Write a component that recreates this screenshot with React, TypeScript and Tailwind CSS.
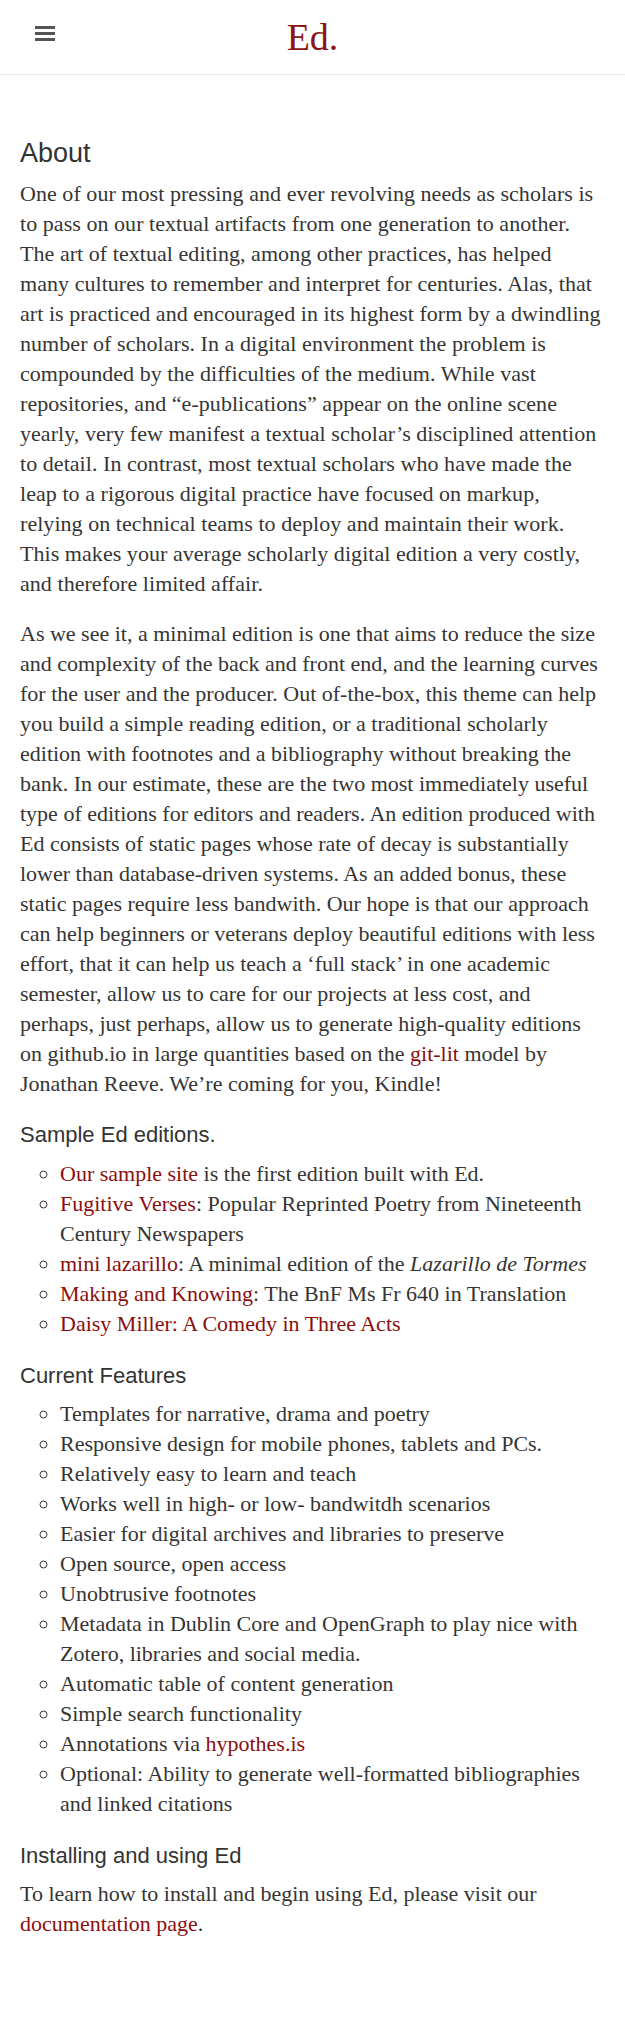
const serif = "font-['Liberation_Serif',_'Times_New_Roman',_serif]"
const sans = "font-['Liberation_Sans',_Arial,_sans-serif]"

const A = ({ children }: { children: React.ReactNode }) => (
  <a href="#" className="text-[#8b0e0e] no-underline">
    {children}
  </a>
)

const features: React.ReactNode[] = [
  "Templates for narrative, drama and poetry",
  "Responsive design for mobile phones, tablets and PCs.",
  "Relatively easy to learn and teach",
  "Works well in high- or low- bandwitdh scenarios",
  "Easier for digital archives and libraries to preserve",
  "Open source, open access",
  "Unobtrusive footnotes",
  "Metadata in Dublin Core and OpenGraph to play nice with Zotero, libraries and social media.",
  "Automatic table of content generation",
  "Simple search functionality",
  <>
    Annotations via <A>hypothes.is</A>
  </>,
  "Optional: Ability to generate well-formatted bibliographies and linked citations",
]

const App = () => {
  return (
    <div className={`min-h-[2021px] bg-white text-[#353535] ${serif}`}>
      {/* Header */}
      <header className="h-[75px] border-b border-[#e8e8e8] grid grid-cols-[1fr_auto_1fr] items-center">
        <button className="self-start pt-[26px] pl-[35px] flex flex-col gap-[3px] w-fit">
          <span className="block w-[20px] h-[3px] bg-[#555]"></span>
          <span className="block w-[20px] h-[3px] bg-[#555]"></span>
          <span className="block w-[20px] h-[3px] bg-[#555]"></span>
        </button>
        <div className="text-[38px] leading-none text-[#8b1414]">Ed.</div>
        <div></div>
      </header>

      {/* Content */}
      <main className="px-[20px] pt-[62px] pb-[80px] text-[22px] leading-[30px]">
        <h2 className={`${sans} text-[27px] leading-[32px] text-[#333] mb-[10px]`}>About</h2>
        <p className="mb-[20px] tracking-[0.05px]">
          One of our most pressing and ever revolving needs as scholars is to pass on our textual artifacts from one
          generation to another. The art of textual editing, among other practices, has helped many cultures to remember
          and interpret for centuries. Alas, that art is practiced and encouraged in its highest form by a dwindling
          number of scholars. In a digital environment the problem is compounded by the difficulties of the medium. While
          vast repositories, and “e-publications” appear on the online scene yearly, very few manifest a textual
          scholar’s disciplined attention to detail. In contrast, most textual scholars who have made the leap to a
          rigorous digital practice have focused on markup, relying on technical teams to deploy and maintain their
          work. This makes your average scholarly digital edition a very costly, and therefore limited affair.
        </p>
        <p>
          As we see it, a minimal edition is one that aims to reduce the size and complexity of the back and front end,
          and the learning curves for the user and the producer. Out of-the-box, this theme can help you build a simple
          reading edition, or a traditional scholarly edition with footnotes and a bibliography without breaking the
          bank. In our estimate, these are the two most immediately useful type of editions for editors and readers. An
          edition produced with Ed consists of static pages whose rate of decay is substantially lower than
          database-driven systems. As an added bonus, these static pages require less bandwith. Our hope is that our
          approach can help beginners or veterans deploy beautiful editions with less effort, that it can help us teach
          a ‘full stack’ in one academic semester, allow us to care for our projects at less cost, and perhaps, just
          perhaps, allow us to generate high-quality editions on github.io in large quantities based on the{" "}
          <A>git-lit</A> model by Jonathan Reeve. We’re coming for you, Kindle!
        </p>

        <h3 className={`${sans} text-[22px] leading-[26px] text-[#333] mt-[23px] mb-[11px]`}>Sample Ed editions.</h3>
        <ul className="list-[circle] pl-[40px]">
          <li>
            <A>Our sample site</A> is the first edition built with Ed.
          </li>
          <li>
            <A>Fugitive Verses</A>: Popular Reprinted Poetry from Nineteenth Century Newspapers
          </li>
          <li>
            <A>mini lazarillo</A>: A minimal edition of the <em>Lazarillo de Tormes</em>
          </li>
          <li>
            <A>Making and Knowing</A>: The BnF Ms Fr 640 in Translation
          </li>
          <li>
            <A>Daisy Miller: A Comedy in Three Acts</A>
          </li>
        </ul>

        <h3 className={`${sans} text-[22px] leading-[26px] text-[#333] mt-[24px] mb-[10px]`}>Current Features</h3>
        <ul className="list-[circle] pl-[40px]">
          {features.map((f, i) => (
            <li key={i}>{f}</li>
          ))}
        </ul>

        <h3 className={`${sans} text-[22px] leading-[26px] text-[#333] mt-[24px] mb-[10px]`}>
          Installing and using Ed
        </h3>
        <p>
          To learn how to install and begin using Ed, please visit our <A>documentation page</A>.
        </p>
      </main>
    </div>
  )
}

export default App
